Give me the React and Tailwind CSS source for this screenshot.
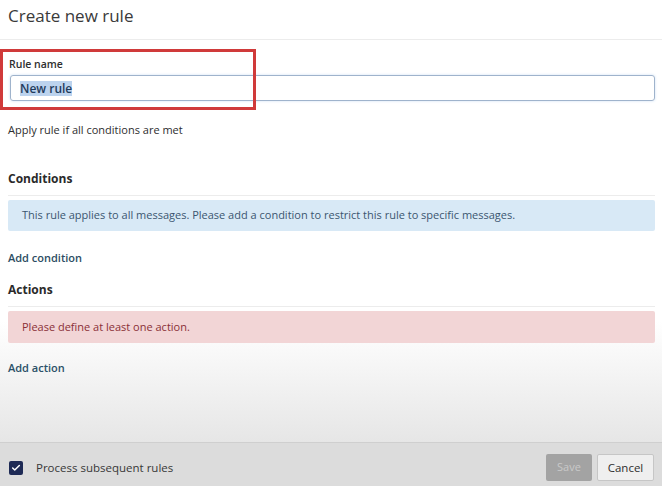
import { Check } from "lucide-react";

// Create new rule dialog

export default function App() {
  return (
    <div
      className="relative w-[662px] h-[486px] overflow-hidden flex flex-col bg-white text-[#2d2d2d]"
      style={{ fontFamily: '"Open Sans", "Noto Sans", sans-serif' }}
    >
      {/* Header */}
      <div className="h-[40px] shrink-0 border-b border-[#ececec] px-[8px] flex items-center">
        <h1 className="text-[17px] leading-none text-[#3a3a3a] -mt-[9px]">Create new rule</h1>
      </div>

      {/* Body */}
      <div className="flex-1 flex flex-col pl-[8px] pr-[7px] bg-gradient-to-b from-white from-70% to-[#e6e6e6]">
        <label className="mt-[18px] text-[10.5px] font-semibold leading-[12px] text-[#2e2e2e] px-[1px]">
          Rule name
        </label>
        <div className="mt-[5px] ml-[2px] h-[26px] rounded-[3px] border border-[#9fb3cc] shadow-[0_0_3px_#cfe0f3] flex items-center px-[9px]">
          <span className="bg-[#bcd3ee] text-[12px] font-semibold text-[#1f3b5c] leading-[15px]">New rule</span>
        </div>

        <p className="mt-[22px] text-[11px] leading-[14px] text-[#2e2e2e]">Apply rule if all conditions are met</p>

        <h2 className="mt-[35px] text-[12px] font-bold leading-[14px] text-[#2a2a2a]">Conditions</h2>
        <div className="mt-[9px] border-t border-[#ececec]" />
        <div className="mt-[4px] h-[31px] rounded-[2px] bg-[#d8e9f6] flex items-center px-[14px] text-[11px] text-[#3b5670]">
          This rule applies to all messages. Please add a condition to restrict this rule to specific messages.
        </div>
        <a className="mt-[20px] text-[11px] font-semibold leading-[14px] text-[#2d4d63]">Add condition</a>

        <h2 className="mt-[18px] text-[12px] font-bold leading-[14px] text-[#2a2a2a]">Actions</h2>
        <div className="mt-[9px] border-t border-[#ececec]" />
        <div className="mt-[4px] h-[32px] rounded-[2px] bg-[#f2d5d6] flex items-center px-[14px] text-[11px] text-[#8a3036]">
          Please define at least one action.
        </div>
        <a className="mt-[18px] text-[11px] font-semibold leading-[14px] text-[#2b5068]">Add action</a>
      </div>

      {/* Footer */}
      <div className="h-[44px] shrink-0 border-t border-[#cfcfcf] bg-[#dcdcdc] flex items-center pl-[9px] pr-[8px]">
        <span className="w-[14px] h-[14px] rounded-[2px] bg-[#1e2a55] flex items-center justify-center mt-[6px]">
          <Check className="w-[10px] h-[10px] text-white" strokeWidth={3.5} />
        </span>
        <span className="ml-[13px] mt-[6px] text-[11.5px] text-[#383838]">Process subsequent rules</span>
        <div className="ml-auto flex gap-[5px] mt-[6px]">
          <button className="w-[46px] h-[27px] rounded-[2px] bg-[#a3a3a3] text-[11px] text-[#c9c9c9]">Save</button>
          <button className="w-[57px] h-[27px] rounded-[2px] bg-[#efefef] border border-[#c6c6c6] text-[11.5px] text-[#2e2e2e]">
            Cancel
          </button>
        </div>
      </div>

      {/* Annotation highlight */}
      <div className="absolute left-0 top-[49px] w-[256px] h-[61px] border-[3px] border-[#d03a3a] pointer-events-none" />
    </div>
  );
}
